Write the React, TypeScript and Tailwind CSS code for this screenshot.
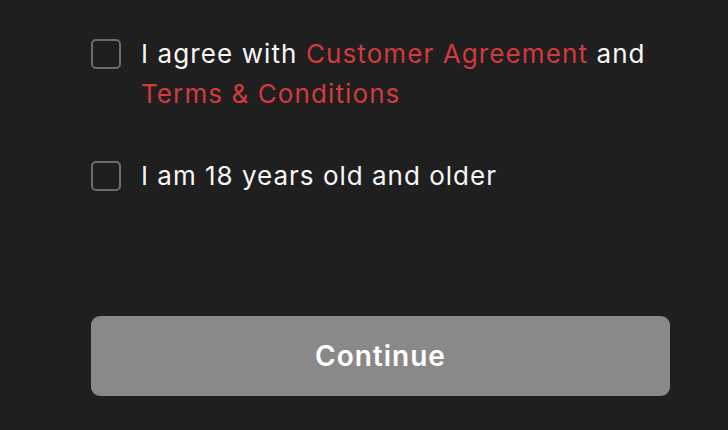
import React from "react";

function Box() {
  return (
    <span className="mt-[5px] block h-[30px] w-[30px] shrink-0 rounded-[5px] border-2 border-[#6c6c6c]" />
  );
}

export default function App() {
  return (
    <div
      className="h-[430px] w-[728px] bg-[#1f1f1f] pl-[91px] pr-[58px] pt-[34px]"
      style={{ fontFamily: "Inter, 'Noto Sans', sans-serif" }}
    >
      <label className="flex gap-[20px] text-[26px] leading-[40px] tracking-[1.1px] text-[#f7f7f7]">
        <Box />
        <span>
          I agree with <span className="text-[#d23a3e]">Customer Agreement</span> and
          <br />
          <span className="text-[#d23a3e]">Terms &amp; Conditions</span>
        </span>
      </label>
      <label className="mt-[42px] flex gap-[20px] text-[26px] leading-[40px] tracking-[1px] text-[#f7f7f7]">
        <Box />
        <span>I am 18 years old and older</span>
      </label>
      <button className="mt-[120px] flex h-[80px] w-full items-center justify-center rounded-[9px] bg-[#898989] text-[28px] font-semibold tracking-[1px] text-white">
        Continue
      </button>
    </div>
  );
}
